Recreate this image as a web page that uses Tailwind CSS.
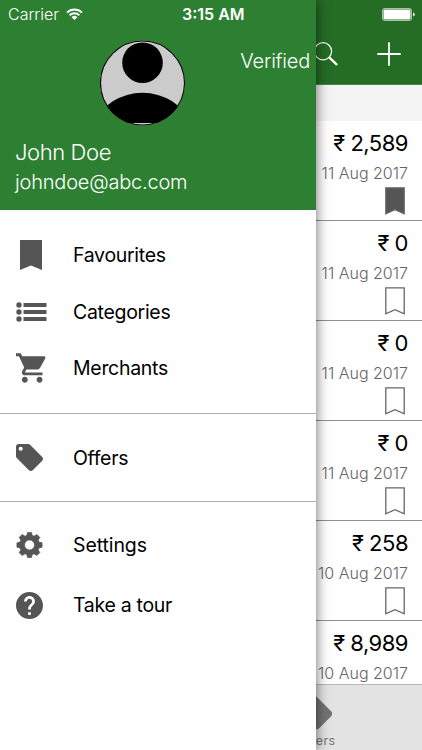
<!DOCTYPE html>
<html lang="en">
<head>
  <meta charset="UTF-8">
  <title>Receipts</title>
  <meta name="viewport" content="width=device-width, initial-scale=1.0">
  <script src="https://cdn.jsdelivr.net/npm/@tailwindcss/browser@4"></script>
</head>
<body class="bg-white font-['Inter','Roboto',sans-serif]">

  <svg class="hidden">
    <defs>
      <path id="bookmark" d="M.8.8h18.4v26L10 22.6.8 26.8z"/>
      <path id="tag" d="M21.41 11.58l-9-9C12.05 2.22 11.55 2 11 2H4c-1.1 0-2 .9-2 2v7c0 .55.22 1.05.59 1.42l9 9c.36.36.86.58 1.41.58.55 0 1.05-.22 1.41-.59l7-7c.37-.36.59-.86.59-1.41 0-.55-.23-1.06-.59-1.42zM5.5 7C4.67 7 4 6.33 4 5.5S4.67 4 5.5 4 7 4.67 7 5.5 6.33 7 5.5 7z"/>
    </defs>
  </svg>

  <div class="relative h-[750px] w-[422px] overflow-hidden">

    <!-- Receipts page -->
    <main class="flex h-full flex-col bg-white">
      <header class="flex h-[85px] shrink-0 items-end justify-end gap-[39px] border-b border-[#4d8350] bg-[#256c24] pr-[21px] pb-[18px]">
        <svg class="h-6 w-6" viewBox="0 0 24 24" fill="none" stroke="#fff"><circle cx="9" cy="9.3" r="8.6" stroke-width="1.2"/><path d="M15.5 15.7l7 6.600" stroke-width="2.3" stroke-linecap="round"/></svg>
        <svg class="h-6 w-6" viewBox="0 0 24 24" stroke="#fff" stroke-width="1.8"><path d="M12 .3v23.4M.3 12h23.4"/></svg>
      </header>
      <div class="h-[36px] shrink-0 bg-[#f3f3f3]"></div>
      <ul id="receipts" class="h-[563px] shrink-0 overflow-hidden"></ul>
      <footer class="flex grow flex-col border-t border-[#b8b8b8] bg-[#e3e3e3] pt-[9px] pl-[297px]">
        <svg class="h-[36px] w-[36px] fill-[#737373]" viewBox="1.5 1.5 21 21"><use href="#tag"/></svg>
        <span class="mt-[4px] w-[38px] text-right text-[12.5px] leading-[14px] tracking-[0.3px] text-[#777]">Offers</span>
      </footer>
    </main>

    <!-- Drawer -->
    <aside class="absolute top-0 left-0 h-full w-[316px] bg-white shadow-[0_0_12px_rgba(0,0,0,0.6)]">
      <div class="flex h-[210px] flex-col bg-[#2d7f31] pt-[40px] text-white">
        <div class="flex h-[86px] justify-end">
          <svg class="mr-[54px] h-[86px] w-[86px]" viewBox="0 0 86 86">
            <defs>
              <clipPath id="round"><circle cx="42.5" cy="43" r="42.5"/></clipPath>
              <filter id="soft"><feGaussianBlur stdDeviation=".6"/></filter>
            </defs>
            <g clip-path="url(#round)">
              <rect width="86" height="86" fill="#cbcbcb"/>
              <g filter="url(#soft)">
                <circle cx="42.5" cy="22.7" r="20.3"/>
                <path d="M-5 83A50 44 0 0 1 90 83z"/>
              </g>
            </g>
            <circle cx="42.5" cy="43" r="42" fill="none" stroke="#000" stroke-width="1.1"/>
          </svg>
          <span class="mt-[8px] mr-[6px] text-[20px] leading-[26px] font-light tracking-[-0.2px]">Verified</span>
        </div>
        <p class="mt-[12px] pl-[15px] text-[22px] leading-[28px] font-light tracking-[-0.4px]">John Doe</p>
        <p class="mt-[3px] pl-[15px] text-[20px] leading-[26px] font-light tracking-[-0.2px]">johndoe@abc.com</p>
      </div>

      <nav class="text-[19.5px] leading-[26px] tracking-[-0.3px] text-black">
        <div class="border-b border-[#b3b3b3] pt-[16px] pb-[17px]">
          <a class="flex h-[57px] items-center pl-[15px]">
            <span class="w-[58px]"><svg class="ml-[5px] h-[30px] w-[22px] fill-[#555]" viewBox="0 0 22 30"><path d="M0 0h22v30l-11-4.500-11 4.500z"/></svg></span>
            <span>Favourites</span>
          </a>
          <a class="flex h-[57px] items-center pl-[15px]">
            <span class="w-[58px]"><svg class="ml-[1px] h-[20px] w-[31px] fill-[#555]" viewBox="0 0 31 20"><circle cx="3" cy="3" r="2.7"/><circle cx="3" cy="10" r="2.7"/><circle cx="3" cy="17" r="2.7"/><path d="M7.500 1h23v4h-23zM7.500 8h23v4h-23zM7.500 15h23v4h-23z"/></svg></span>
            <span>Categories</span>
          </a>
          <a class="flex h-[56px] items-center pl-[15px]">
            <span class="w-[58px]"><svg class="ml-[1px] h-[30px] w-[30px] fill-[#555]" viewBox="1 2 20.4 20"><path d="M7 18c-1.1 0-1.99.9-1.99 2S5.9 22 7 22s2-.9 2-2-.9-2-2-2zM1 2v2h2l3.6 7.59-1.35 2.45c-.16.28-.25.61-.25.96 0 1.1.9 2 2 2h12v-2H7.42c-.14 0-.25-.11-.25-.25l.03-.12.9-1.63h7.45c.75 0 1.41-.41 1.75-1.03l3.58-6.49c.08-.14.12-.31.12-.48 0-.55-.45-1-1-1H5.21l-.94-2H1zm16 16c-1.1 0-1.99.9-1.99 2s.89 2 1.99 2 2-.9 2-2-.9-2-2-2z"/></svg></span>
            <span>Merchants</span>
          </a>
        </div>
        <div class="border-b border-[#b3b3b3] py-[15px]">
          <a class="flex h-[57px] items-center pl-[15px]">
            <span class="w-[58px]"><svg class="mb-[1px] ml-[1px] h-[27px] w-[27px] fill-[#555]" viewBox="2 2 20 20"><use href="#tag"/></svg></span>
            <span>Offers</span>
          </a>
        </div>
        <div class="pt-[13px]">
          <a class="flex h-[60px] items-center pl-[15px]">
            <span class="w-[58px]"><svg class="ml-[1px] h-[26px] w-[27px] fill-[#555]" viewBox="2 2 20 20"><path fill-rule="evenodd" stroke="#555" stroke-width=".6" stroke-linejoin="round" d="M10.500 2.300h3l.5 2.300 1.500.65 2.200-1.300 2.200 2.200-1.250 2.100.6 1.500 2.400.6v3.300l-2.400.6-.6 1.500 1.250 2.100-2.200 2.200-2.200-1.300-1.500.65-.5 2.300h-3l-.5-2.300-1.500-.65-2.200 1.300-2.200-2.200 1.250-2.100-.6-1.500-2.400-.6v-3.300l2.400-.6.6-1.500L4.100 6.150l2.200-2.200 2.200 1.300 1.500-.65zM12 8.100a3.900 3.900 0 1 0 0 7.800 3.900 3.900 0 0 0 0-7.800z"/></svg></span>
            <span class="tracking-[-0.1px]">Settings</span>
          </a>
          <a class="flex h-[60px] items-center pl-[15px]">
            <span class="w-[58px]"><svg class="ml-[1px] h-[27px] w-[27px] fill-[#555]" viewBox="2 2 20 20"><path d="M12 2C6.48 2 2 6.48 2 12s4.48 10 10 10 10-4.48 10-10S17.52 2 12 2zm1 17h-2v-2h2v2zm2.070-7.75l-.9.92C13.45 12.9 13 13.5 13 15h-2v-.5c0-1.1.45-2.1 1.17-2.83l1.24-1.26c.37-.36.59-.86.59-1.41 0-1.1-.9-2-2-2s-2 .9-2 2H8c0-2.21 1.79-4 4-4s4 1.79 4 4c0 .88-.36 1.68-.93 2.25z"/></svg></span>
            <span>Take a tour</span>
          </a>
        </div>
      </nav>
    </aside>

    <!-- Status bar -->
    <div class="absolute inset-x-0 top-0 flex h-7 items-center pl-[8px] text-[16px] leading-none text-white">
      <span class="w-[58px] font-light">Carrier</span>
      <svg class="h-[12px] w-[17px]" viewBox="0 0 17 12" fill="none" stroke="#fff" stroke-width="1.9"><path d="M1 4.600a10.600 10.600 0 0 1 15 0M3.600 7.300a7 7 0 0 1 9.800 0"/><path d="M8.500 12L5.600 9.200a4.200 4.200 0 0 1 5.800 0z" fill="#fff" stroke="none"/></svg>
      <span class="ml-[99px] font-semibold">3:15 AM</span>
      <svg class="mr-[7px] ml-auto h-[13px] w-[33px]" viewBox="0 0 33 13"><rect x=".5" y=".5" width="29" height="12" rx="2" fill="none" stroke="#fff" stroke-opacity=".6"/><rect x="1.5" y="1.5" width="27" height="10" rx="1" fill="#fff"/><path d="M31 4.500q2 .5 2 2t-2 2z" fill="#fff" fill-opacity=".8"/></svg>
    </div>
  </div>

  <script>
    const receipts = [
      { amount: "2,589", date: "11 Aug 2017", saved: true },
      { amount: "0", date: "11 Aug 2017" },
      { amount: "0", date: "11 Aug 2017" },
      { amount: "0", date: "11 Aug 2017" },
      { amount: "258", date: "10 Aug 2017" },
      { amount: "8,989", date: "10 Aug 2017" },
    ];

    document.getElementById("receipts").innerHTML = receipts.map((r) => `
      <li class="flex h-[100px] flex-col items-end border-b border-[#8f8f8f] pt-[8px] pr-[14px]">
        <span class="text-[22px] leading-[28px] tracking-[-0.5px] text-black">₹ ${r.amount}</span>
        <span class="mt-[6px] text-[16px] leading-[20px] font-light text-[#666]">${r.date}</span>
        <svg class="mt-[4px] mr-[3px] h-[28px] w-[20px] ${r.saved ? "fill-[#555]" : "fill-none"} stroke-[#666] stroke-[1.3]" viewBox="0 0 20 28"><use href="#bookmark"/></svg>
      </li>`).join("");
  </script>

</body>
</html>
